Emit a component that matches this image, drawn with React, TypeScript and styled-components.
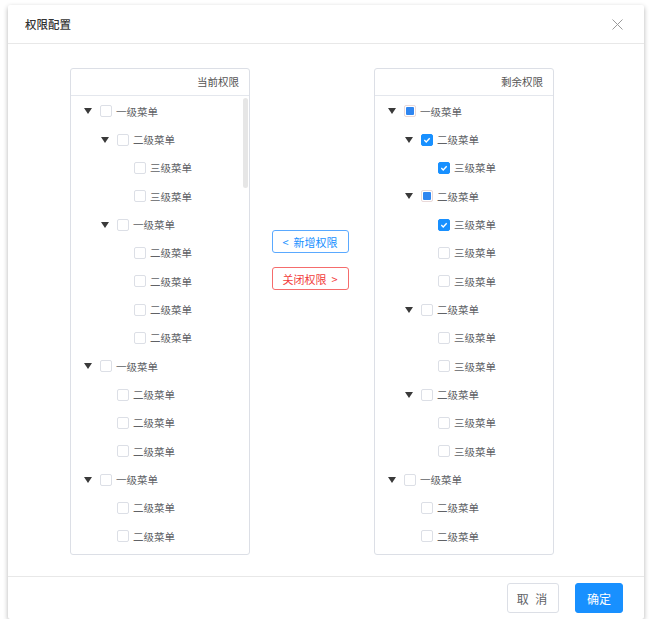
import React from 'react';
import styled, { createGlobalStyle } from 'styled-components';

type CheckState = 'none' | 'checked' | 'half';

interface Node {
    level: number;
    label: string;
    caret?: boolean;
    state?: CheckState;
}

const l1 = (state: CheckState = 'none'): Node => ({ level: 1, label: '一级菜单', caret: true, state });
const l2 = (label: string, caret = false, state: CheckState = 'none'): Node => ({ level: 2, label, caret, state });
const l3 = (label: string, state: CheckState = 'none'): Node => ({ level: 3, label, state });

const currentRows: Node[] = [
    l1(),
    l2('二级菜单', true),
    l3('三级菜单'),
    l3('三级菜单'),
    l2('一级菜单', true),
    l3('二级菜单'),
    l3('二级菜单'),
    l3('二级菜单'),
    l3('二级菜单'),
    l1(),
    l2('二级菜单'),
    l2('二级菜单'),
    l2('二级菜单'),
    l1(),
    l2('二级菜单'),
    l2('二级菜单'),
];

const restRows: Node[] = [
    l1('half'),
    l2('二级菜单', true, 'checked'),
    l3('三级菜单', 'checked'),
    l2('二级菜单', true, 'half'),
    l3('三级菜单', 'checked'),
    l3('三级菜单'),
    l3('三级菜单'),
    l2('二级菜单', true),
    l3('三级菜单'),
    l3('三级菜单'),
    l2('二级菜单', true),
    l3('三级菜单'),
    l3('三级菜单'),
    l1(),
    l2('二级菜单'),
    l2('二级菜单'),
];

const TreeRow = ({ node }: { node: Node }) => (
    <Row level={node.level}>
        <CaretSlot>{node.caret && <Caret />}</CaretSlot>
        <Box state={node.state || 'none'}>
            {node.state === 'checked' && (
                <svg width="8" height="8" viewBox="0 0 8 8">
                    <path d="M1.3 4.1 L3.2 5.9 L6.7 2.2" fill="none" stroke="#fff" strokeWidth="1.4" />
                </svg>
            )}
            {node.state === 'half' && <HalfMark />}
        </Box>
        <Label>{node.label}</Label>
    </Row>
);

const App = () => {
    return (
        <>
            <GlobalStyle />
            <Modal>
                <Header>
                    <Title>权限配置</Title>
                    <svg width="11" height="11" viewBox="0 0 11 11">
                        <path d="M0.5 0.5 L10.5 10.5 M10.5 0.5 L0.5 10.5" stroke="#9a9a9a" strokeWidth="1" />
                    </svg>
                </Header>
                <Body>
                    <Panel>
                        <PanelHead>当前权限</PanelHead>
                        <TreeList>
                            {currentRows.map((n, i) => (
                                <TreeRow key={i} node={n} />
                            ))}
                        </TreeList>
                        <ScrollThumb />
                    </Panel>
                    <Middle>
                        <MoveButton tone="blue">&lt;&nbsp; 新增权限</MoveButton>
                        <MoveButton tone="red">关闭权限&nbsp; &gt;</MoveButton>
                    </Middle>
                    <Panel>
                        <PanelHead>剩余权限</PanelHead>
                        <TreeList>
                            {restRows.map((n, i) => (
                                <TreeRow key={i} node={n} />
                            ))}
                        </TreeList>
                    </Panel>
                </Body>
                <Footer>
                    <FooterButton>取 消</FooterButton>
                    <FooterButton primary>确定</FooterButton>
                </Footer>
            </Modal>
        </>
    );
};

export default App;

const GlobalStyle = createGlobalStyle`
    body {
        margin: 0;
        background: #fff;
        font-family: "Noto Sans CJK SC", "Noto Sans", sans-serif;
    }
`;

const Modal = styled.div`
    margin: 5px 0 0 8px;
    width: 636px;
    height: 614px;
    background: #fff;
    border-radius: 2px;
    box-shadow: 0 2px 5px rgba(0, 0, 0, 0.3);
    display: flex;
    flex-direction: column;
`;

const Header = styled.div`
    height: 38px;
    flex-shrink: 0;
    padding: 0 21px 0 17px;
    display: flex;
    align-items: center;
    justify-content: space-between;
    border-bottom: 1px solid #e8e8e8;
`;

const Title = styled.div`
    font-size: 11.5px;
    color: #333;
    font-weight: 500;
`;

const Body = styled.div`
    flex: 1;
    display: flex;
    padding: 24px 0 21px 62px;
    min-height: 0;
`;

const Panel = styled.div`
    position: relative;
    width: 180px;
    border: 1px solid #dcdfe6;
    border-radius: 3px;
    display: flex;
    flex-direction: column;
    overflow: hidden;
    box-sizing: border-box;
`;

const PanelHead = styled.div`
    height: 26px;
    line-height: 26px;
    flex-shrink: 0;
    padding-right: 10px;
    text-align: right;
    font-size: 10.5px;
    color: #555;
    border-bottom: 1px solid #e4e7ed;
`;

const TreeList = styled.div`
    flex: 1;
    overflow: hidden;
    padding-top: 1px;
`;

const ScrollThumb = styled.div`
    position: absolute;
    right: 1px;
    top: 29px;
    width: 5px;
    height: 90px;
    border-radius: 3px;
    background: #e6e6e6;
`;

const Row = styled.div<{ level: number }>`
    height: 28.35px;
    display: flex;
    align-items: center;
    padding-left: ${({ level }) => 13 + (level - 1) * 17}px;
`;

const CaretSlot = styled.span`
    width: 16px;
    flex-shrink: 0;
    display: flex;
    align-items: center;
`;

const Caret = styled.span`
    width: 0;
    height: 0;
    border-left: 4.5px solid transparent;
    border-right: 4.5px solid transparent;
    border-top: 6px solid #3a3a3a;
`;

const Box = styled.span<{ state: CheckState }>`
    width: 12px;
    height: 12px;
    box-sizing: border-box;
    flex-shrink: 0;
    border-radius: 2px;
    margin-right: 4px;
    display: flex;
    align-items: center;
    justify-content: center;
    border: 1px solid ${({ state }) => (state === 'checked' ? '#1890ff' : state === 'half' ? '#e9d9d9' : '#dcdfe6')};
    background: ${({ state }) => (state === 'checked' ? '#1890ff' : '#fff')};
`;

const HalfMark = styled.span`
    width: 8px;
    height: 8px;
    border-radius: 1px;
    background: #2f86f0;
`;

const Label = styled.span`
    font-size: 10.5px;
    color: #606266;
    white-space: nowrap;
`;

const Middle = styled.div`
    width: 124px;
    box-sizing: border-box;
    padding-right: 4px;
    display: flex;
    flex-direction: column;
    align-items: center;
    padding-top: 162px;
    gap: 14px;
`;

const MoveButton = styled.button<{ tone: 'blue' | 'red' }>`
    width: 77px;
    height: 23px;
    padding: 0;
    background: #fff;
    border-radius: 3px;
    font-family: inherit;
    font-size: 11px;
    border: 1px solid ${({ tone }) => (tone === 'blue' ? '#5aa9ff' : '#f56c6c')};
    color: ${({ tone }) => (tone === 'blue' ? '#1890ff' : '#f23c3c')};
`;

const Footer = styled.div`
    height: 42px;
    flex-shrink: 0;
    border-top: 1px solid #e8e8e8;
    display: flex;
    align-items: center;
    justify-content: flex-end;
    gap: 16px;
    padding-right: 21px;
`;

const FooterButton = styled.button<{ primary?: boolean }>`
    height: 30px;
    width: ${({ primary }) => (primary ? '48px' : '52px')};
    padding: 0;
    border-radius: 3px;
    font-family: inherit;
    font-size: 12px;
    letter-spacing: ${({ primary }) => (primary ? '0' : '2px')};
    border: 1px solid ${({ primary }) => (primary ? '#1890ff' : '#dcdfe6')};
    background: ${({ primary }) => (primary ? '#1890ff' : '#fff')};
    color: ${({ primary }) => (primary ? '#fff' : '#606266')};
`;
